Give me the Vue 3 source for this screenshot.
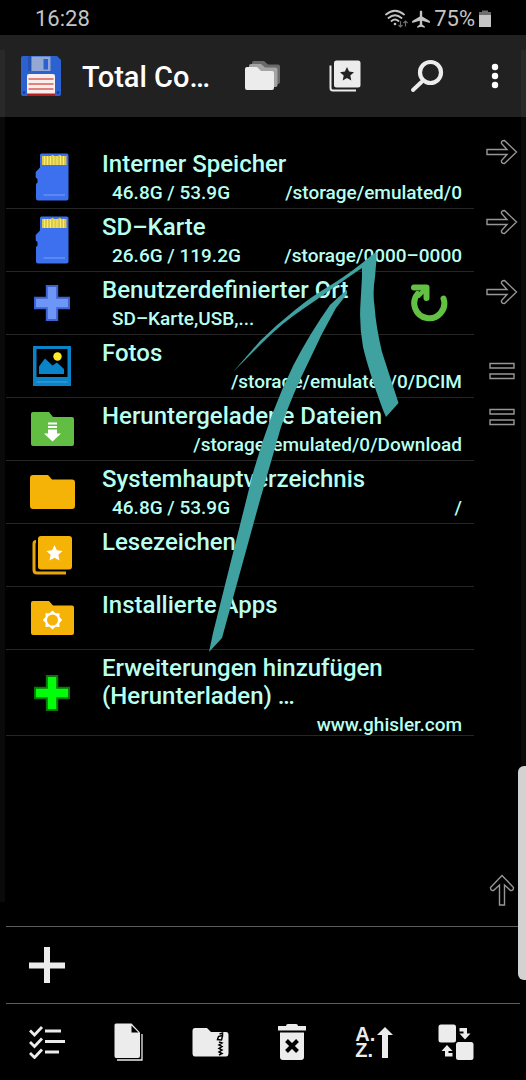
<script setup>
const places = [
  { icon: 'sd', title: 'Interner Speicher', info: '46.8G / 53.9G', path: '/storage/emulated/0' },
  { icon: 'sd', title: 'SD–Karte', info: '26.6G / 119.2G', path: '/storage/0000–0000' },
  { icon: 'plusBlue', title: 'Benutzerdefinierter Ort', info: 'SD–Karte,USB,...', path: '', refresh: true },
  { icon: 'photo', title: 'Fotos', info: '', path: '/storage/emulated/0/DCIM' },
  { icon: 'download', title: 'Heruntergeladene Dateien', info: '', path: '/storage/emulated/0/Download' },
  { icon: 'folder', title: 'Systemhauptverzeichnis', info: '46.8G / 53.9G', path: '/' },
  { icon: 'bookmark', title: 'Lesezeichen', info: '', path: '' },
  { icon: 'apps', title: 'Installierte Apps', info: '', path: '' },
  { icon: 'plusGreen', title: 'Erweiterungen hinzufügen (Herunterladen) …', info: '', path: 'www.ghisler.com' },
]
</script>

<template>
  <div class="app">
    <div class="status">
      <span>16:28</span>
      <div class="status-right">
        <svg width="24" height="20" viewBox="0 0 24 20" fill="none" stroke="#c4c4c4" stroke-width="1.8" stroke-linecap="round">
          <path d="M2 5.500Q11 -2 20 5.500M4.500 9Q11 3.500 17.500 9M7.500 12Q11 9 14.500 12" />
          <circle cx="11" cy="15" r="1.300" fill="#c4c4c4" stroke="none" />
          <path d="M16.500 12.500V18M14.700 16.300L16.500 18L18.300 16.300M21.500 17V12M19.700 13.700L21.500 12L23.300 13.700" stroke="#6d6d6d" stroke-width="1.200" />
        </svg>
        <svg width="18" height="18" viewBox="0 0 18 18" fill="#c4c4c4">
          <path d="M7.800 1.500Q9 -0.500 10.200 1.500V6.500L17.800 11V13L10.200 10.800V14.500L12.800 16.500V17.800L9 16.800L5.200 17.800V16.500L7.800 14.500V10.800L0.200 13V11L7.800 6.500Z" />
        </svg>
        <span>75%</span>
        <svg width="12" height="18" viewBox="0 0 12 18">
          <path d="M3 0.500H9V2H12V6H0V2H3Z" fill="#6d6d6d" />
          <path d="M0 5H12V17H0Z" fill="#c4c4c4" />
        </svg>
      </div>
    </div>

    <header class="toolbar">
      <svg width="40" height="40" viewBox="0 0 40 40">
        <path d="M2 0H36L40 4V38Q40 40 38 40H2Q0 40 0 38V2Q0 0 2 0Z" fill="#2c62cf" />
        <path d="M7 0H10V15H7Z" fill="#2452b4" />
        <path d="M10.500 0.500H29.500V15H10.500Z" fill="#93a9d3" />
        <path d="M22.500 3H27V13.500H22.500Z" fill="#2c62cf" />
        <path d="M8 18H32Q34 18 34 20V40H6V20Q6 18 8 18Z" fill="#f6efee" />
        <path d="M7.500 23H32.500M7.500 28H32.500M7.500 33H32.500" stroke="#e3827d" stroke-width="1.800" />
        <path d="M6 37.500H34V40H6Z" fill="#b81f1c" />
        <circle cx="3" cy="36.500" r="1.300" fill="#173c8c" />
        <circle cx="37" cy="36.500" r="1.300" fill="#173c8c" />
      </svg>
      <h1>Total Co…</h1>
      <button class="tool" aria-label="Ordner">
        <svg width="36" height="30" viewBox="0 0 36 30">
          <path d="M9 0H19L23 3.500H33Q35 3.500 35 5.500V21Q35 23 33 23H7V2Q7 0 9 0Z" fill="#696969" />
          <path d="M6 3H16L20 6.500H30.500Q32.500 6.500 32.500 8.500V24Q32.500 26 30.500 26H4V5Q4 3 6 3Z" fill="#a4a4a4" />
          <path d="M2 6H12L16 10H27Q29 10 29 12V27Q29 29 27 29H2Q0 29 0 27V8Q0 6 2 6Z" fill="#ececec" />
        </svg>
      </button>
      <button class="tool" aria-label="Lesezeichen">
        <svg width="32" height="32" viewBox="0 0 32 32">
          <path d="M1.500 5.500V28Q1.500 30.500 4 30.500H27" fill="none" stroke="#ececec" stroke-width="2" />
          <rect x="5" y="0.500" width="26.500" height="27" rx="2.500" fill="#ececec" />
          <path d="M18 7L20.100 11.600L25 12.200L21.300 15.600L22.300 20.500L18 18L13.700 20.500L14.700 15.600L11 12.200L15.900 11.600Z" fill="#212121" />
        </svg>
      </button>
      <button class="tool" aria-label="Suchen">
        <svg width="34" height="34" viewBox="0 0 34 34" fill="none" stroke="#ececec">
          <circle cx="20.500" cy="13.500" r="10.500" stroke-width="4.200" />
          <path d="M11.500 23L3 31" stroke-width="4" stroke-linecap="round" />
        </svg>
      </button>
      <button class="tool more" aria-label="Menü">
        <svg width="8" height="26" viewBox="0 0 8 26" fill="#fff">
          <circle cx="4" cy="4" r="3.200" /><circle cx="4" cy="13" r="3.200" /><circle cx="4" cy="22" r="3.200" />
        </svg>
      </button>
    </header>

    <main class="content">
      <ul class="places">
        <li v-for="place in places" :key="place.title">
          <button class="place">
            <span class="icon">
              <svg v-if="place.icon === 'sd'" width="34" height="48" viewBox="0 0 34 48">
                <path d="M6.500 0.500H31.500Q33.500 0.500 33.500 2.500V45.500Q33.500 47.500 31.500 47.500H3Q1 47.500 1 45.500V31L2.500 29.500V26L0.700 24.500V19L5 14.500V2Q5 0.500 6.500 0.500Z" fill="#3d70ee" />
                <path d="M7 3H16L17 2H18.500V3H23L24 2H25.500L26 3H31.500V12H7Z" fill="#dcc64b" />
                <path d="M9.500 3V12M12.500 3V12M15.500 3V12M18.800 3V12M22 3V12M25.500 3V12M28.500 3V12" stroke="#f7ee69" stroke-width="1" />
                <path d="M8.500 42H30" stroke="#7b9ef6" stroke-width="1" />
              </svg>
              <svg v-else-if="place.icon === 'plusBlue'" width="36" height="36" viewBox="0 0 36 36">
                <path d="M12.800 1H23.200V12.800H35V23.200H23.200V35H12.800V23.200H1V12.800H12.800Z" fill="#6e96f6" stroke="#3c62cd" stroke-width="2" />
              </svg>
              <svg v-else-if="place.icon === 'plusGreen'" width="36" height="36" viewBox="0 0 36 36">
                <path d="M12.800 1H23.200V12.800H35V23.200H23.200V35H12.800V23.200H1V12.800H12.800Z" fill="#00ff08" stroke="#087708" stroke-width="2" />
              </svg>
              <svg v-else-if="place.icon === 'photo'" width="38" height="42" viewBox="0 0 38 42">
                <path d="M0 1H38V41H0Z" fill="#0a83c9" />
                <rect x="3.500" y="4" width="31" height="28" fill="#000" />
                <path d="M6 29V21.500L12 13.500L19.500 20.500L24 17.500L31 24V29Z" fill="#0a83c9" />
                <circle cx="24.500" cy="11.500" r="4.200" fill="#ffe92c" />
                <path d="M3.500 37H34.500" stroke="#43a6e0" />
              </svg>
              <svg v-else-if="place.icon === 'download'" width="43" height="34" viewBox="0 0 43 34">
                <path d="M2 0H18L22 5H41Q43 5 43 7V32Q43 34 41 34H2Q0 34 0 32V2Q0 0 2 0Z" fill="#62bd43" />
                <path d="M17 10.500H26V12.500H17ZM17 14H26V16H17ZM17 17.500H26V21.500H30L21.500 29.500L13 21.500H17Z" fill="#fff" />
              </svg>
              <svg v-else-if="place.icon === 'folder'" width="45" height="34" viewBox="0 0 45 34">
                <path d="M3 0H18L22 4.500H42Q45 4.500 45 7.500V31Q45 34 42 34H3Q0 34 0 31V3Q0 0 3 0Z" fill="#f6b307" />
              </svg>
              <svg v-else-if="place.icon === 'bookmark'" width="40" height="39" viewBox="0 0 40 39">
                <path d="M4 5.500Q2 5.500 2 7.500V34Q2 37 5 37H34" fill="none" stroke="#e9a707" stroke-width="3" />
                <path d="M5 0H40V35H5Z" fill="#000" />
                <rect x="6" y="0" width="34" height="33.500" rx="3" fill="#f6b307" />
                <path d="M22.500 9L24.900 14.200L30.500 14.900L26.400 18.800L27.500 24.500L22.500 21.700L17.500 24.500L18.600 18.800L14.500 14.900L20.100 14.200Z" fill="#fff" />
              </svg>
              <svg v-else width="43" height="34" viewBox="0 0 43 34">
                <path d="M2 0H18L22 4.500H41Q43 4.500 43 6.500V32Q43 34 41 34H2Q0 34 0 32V2Q0 0 2 0Z" fill="#f6b307" />
                <path d="M21.500 9.500L24.500 12.300L28.500 12.200L28.400 16L31.200 19L28.400 22L28.500 26L24.500 25.700L21.500 28.600L18.500 25.700L14.500 26L14.600 22L11.800 19L14.600 16L14.500 12.200L18.500 12.300Z" fill="#fff" />
                <circle cx="21.500" cy="19" r="5.500" fill="#f6b307" />
              </svg>
            </span>
            <span class="texts">
              <span class="title">{{ place.title }}</span>
              <span v-if="place.info || place.path" class="details">
                <span>{{ place.info }}</span>
                <span>{{ place.path }}</span>
              </span>
            </span>
          </button>
          <button v-if="place.refresh" class="refresh" aria-label="Zurücksetzen">
            <svg width="38" height="38" viewBox="0 0 38 38" fill="none" stroke="#62c043" stroke-width="6" stroke-linecap="round" stroke-linejoin="round">
              <path d="M33.500 14.500A15 15 0 1 1 7.500 10" />
              <path d="M4 3.500H16.500V14" />
              <path d="M6 12L14 5V8L9 13Z" fill="#62c043" stroke-width="2" />
            </svg>
          </button>
        </li>
      </ul>

      <nav class="rail" aria-label="Kopieren und Navigieren">
        <button v-for="n in 3" :key="n" class="copy" aria-label="Kopieren">
          <svg width="32" height="26" viewBox="0 0 32 26" fill="none" stroke="#969696" stroke-width="1.400">
            <path d="M1 10.500H21L15.500 4.500Q15 1.500 18.500 1.500L30.500 13L18.500 24.500Q15 24.500 15.500 21.500L21 15.500H1Z" />
          </svg>
        </button>
        <button v-for="n in 2" :key="'e' + n" class="same" aria-label="Gleiches Verzeichnis">
          <svg width="26" height="18" viewBox="0 0 26 18" fill="none" stroke="#969696" stroke-width="1.400">
            <path d="M1 1.500H25V6H1ZM1 12H25V16.500H1Z" />
          </svg>
        </button>
        <button class="up" aria-label="Nach oben">
          <svg width="26" height="32" viewBox="0 0 26 32" fill="none" stroke="#969696" stroke-width="1.400">
            <path d="M10.500 31V11L4.500 16.500Q1.500 17 1.500 13.500L13 1.500L24.500 13.500Q24.500 17 21.500 16.500L15.500 11V31Z" />
          </svg>
        </button>
      </nav>
    </main>

    <div class="buttonbar">
      <button aria-label="Schaltfläche hinzufügen">
        <svg width="36" height="36" viewBox="0 0 36 36" stroke="#ececec" stroke-width="6">
          <path d="M18 0V36M0 18.500H36" />
        </svg>
      </button>
    </div>

    <footer class="actions">
      <button aria-label="Auswählen">
        <svg width="36" height="34" viewBox="0 0 36 34" fill="none" stroke="#ececec" stroke-width="2.800">
          <path d="M1 5.500L5.500 10L13 2M1 17L5.500 21.500L13 13.500M1 28L5.500 32.500L13 24.500M16 6H32M16 16.500H36M16 27H30" />
        </svg>
      </button>
      <button aria-label="Kopieren">
        <svg width="29" height="38" viewBox="0 0 29 38">
          <path d="M2 0.500H17.500L26 9.500V33Q26 35 24 35H2Q0.500 35 0.500 33V2Q0.500 0.500 2 0.500Z" fill="#ececec" />
          <path d="M17.500 2.500V9.500H24.500Z" fill="#000" />
          <path d="M3 37H28V11" fill="none" stroke="#ececec" stroke-width="1.300" />
        </svg>
      </button>
      <button aria-label="Packen">
        <svg width="37" height="30" viewBox="0 0 37 30">
          <path d="M3 1H15L19 5H34Q36.500 5 36.500 8V26Q36.500 29.500 34 29.500H3Q0.500 29.500 0.500 26V4Q0.500 1 3 1Z" fill="#ececec" />
          <path d="M27.500 7L30.500 6V9L29.500 13L25.500 12.500L26.500 9.500L30 8.500" fill="none" stroke="#000" stroke-width="1.500" />
          <path d="M27 15L30 16L27 18L30 19.500L27 21.500L30 23L27 25L30 26.500L27 28" fill="none" stroke="#000" stroke-width="1.500" />
        </svg>
      </button>
      <button aria-label="Löschen">
        <svg width="28" height="36" viewBox="0 0 28 36">
          <path d="M8 2Q8 0 10 0H18Q20 0 20 2H28V6.500H0V2Z" fill="#ececec" />
          <path d="M2 8.500H26V33Q26 36 23 36H5Q2 36 2 33Z" fill="#ececec" />
          <path d="M8.500 16.500L19.500 27.500M19.500 16.500L8.500 27.500" stroke="#000" stroke-width="4" />
        </svg>
      </button>
      <button class="sort" aria-label="Sortieren">
        <span class="az">A.<br>Z.</span>
        <svg width="16" height="31" viewBox="0 0 16 31" fill="#ececec">
          <path d="M8 0L16 8H11V31H5V8H0Z" />
        </svg>
      </button>
      <button aria-label="Fenster tauschen">
        <svg width="36" height="36" viewBox="0 0 36 36" fill="#ececec">
          <rect x="0.500" y="0.500" width="17.500" height="18" rx="2.500" />
          <rect x="18" y="18" width="17.500" height="18" rx="2.500" />
          <path d="M21.500 4H29V9.500H32.500L27 15.500L21.500 9.500H25.500V7.500H21.500ZM14.500 32.500H7V27H3.500L9 21L14.500 27H10.500V29H14.500Z" />
        </svg>
      </button>
    </footer>

    <svg class="strokes" width="526" height="700" viewBox="0 0 526 700" fill="#3fa2a0" aria-hidden="true">
      <path d="M376.500 252V259L375 277Q372.500 292 374.500 306Q376 327 382 352L398.500 403L386 417L383 410Q369 372 363 347Q359 325 360.500 303L362 277L362 268Q353 274 343 281Q325 294 303 309Q282 323 262 343L233 372L260 341Q276 325 295 310Q312 296 331 285Q352 272 372 255Z" />
      <path d="M347 290L347 294L336 308Q321 334 309 361Q293 393 281 427L260 500L222 638L209 652L213 633L253 473Q270 413 293 366Q310 333 330 305Q338 297 347 290Z" />
    </svg>
    <div class="edge left"></div>
    <div class="edge right"></div>
    <div class="handle"></div>
  </div>
</template>

<style>
body {
  background: #000;
}
</style>

<style scoped>
.app {
  position: relative;
  display: flex;
  flex-direction: column;
  min-height: 100vh;
  overflow: hidden;
  background: #000;
  font-family: Roboto, "Liberation Sans", sans-serif;
}

button {
  display: flex;
  align-items: center;
  justify-content: center;
  margin: 0;
  padding: 0;
  border: 0;
  background: none;
  color: inherit;
  font: inherit;
}

svg {
  display: block;
  flex: none;
}

.status {
  display: flex;
  align-items: center;
  justify-content: space-between;
  height: 35px;
  padding: 2px 35px 0;
  box-sizing: border-box;
  color: #c4c4c4;
  font-size: 22px;
  line-height: 33px;
}

.status-right {
  display: flex;
  align-items: center;
  gap: 4px;
}

.toolbar {
  display: flex;
  align-items: center;
  height: 82px;
  padding: 0 5px 0 21px;
  background: #212121;
}

h1 {
  flex: 1;
  margin: 2px 0 0 21px;
  color: #fff;
  font-size: 29px;
  font-weight: 500;
  line-height: 36px;
  white-space: nowrap;
}

.tool {
  width: 82px;
  height: 82px;
  padding-left: 2px;
}

.more {
  width: 54px;
}

.content {
  display: flex;
  flex: 1;
  padding-left: 6px;
}

.places {
  flex: 1;
  margin: 29px 0 0;
  padding: 0;
  list-style: none;
  color: #b8fff0;
}

.places li {
  display: flex;
  min-height: 62px;
  border-bottom: 1px solid #262626;
}

.place {
  flex: 1;
  align-items: stretch;
  gap: 4px;
  padding-right: 12px;
  text-align: left;
}

.refresh {
  width: 90px;
}

.icon {
  display: flex;
  align-items: center;
  justify-content: center;
  width: 92px;
}

.texts {
  display: flex;
  flex: 1;
  flex-direction: column;
  gap: 5px;
  padding-top: 4px;
}

.place:not(:last-child) {
  padding-right: 0;
}

.place:not(:last-child) .title {
  white-space: nowrap;
}

.title {
  font-size: 24px;
  font-weight: 500;
  line-height: 28px;
}

.details {
  display: flex;
  justify-content: space-between;
  padding-left: 10px;
  font-size: 19px;
  font-weight: 500;
  line-height: 20px;
  white-space: nowrap;
}

.rail {
  display: flex;
  flex-direction: column;
  width: 52px;
}

.rail button {
  padding-left: 4px;
}

.copy {
  height: 70px;
}

.same {
  height: 46px;
}

.copy + .same {
  margin-top: 21px;
}

.up {
  height: 72px;
  margin-top: auto;
}

.buttonbar,
.actions {
  height: 76px;
  margin: 0 6px;
  border-top: 1px solid #5c5c5c;
}

.buttonbar button {
  width: 82px;
  height: 76px;
}

.actions {
  display: grid;
  grid-template-columns: repeat(6, 1fr);
  padding-right: 23px;
}

.sort {
  gap: 2px;
}

.az {
  color: #ececec;
  font-family: "Liberation Sans", sans-serif;
  font-size: 20px;
  font-weight: 700;
  line-height: 16px;
  text-align: left;
}

.strokes {
  position: absolute;
  top: 0;
  left: 0;
  pointer-events: none;
}

.edge {
  position: absolute;
  top: 50px;
  bottom: 178px;
  width: 5px;
  background: rgba(255, 255, 255, 0.04);
}

.left {
  left: 0;
}

.right {
  right: 0;
}

.handle {
  position: absolute;
  right: 0;
  bottom: 100px;
  width: 8px;
  height: 214px;
  border-radius: 6px 0 0 6px;
  background: #d2d2d2;
}
</style>
